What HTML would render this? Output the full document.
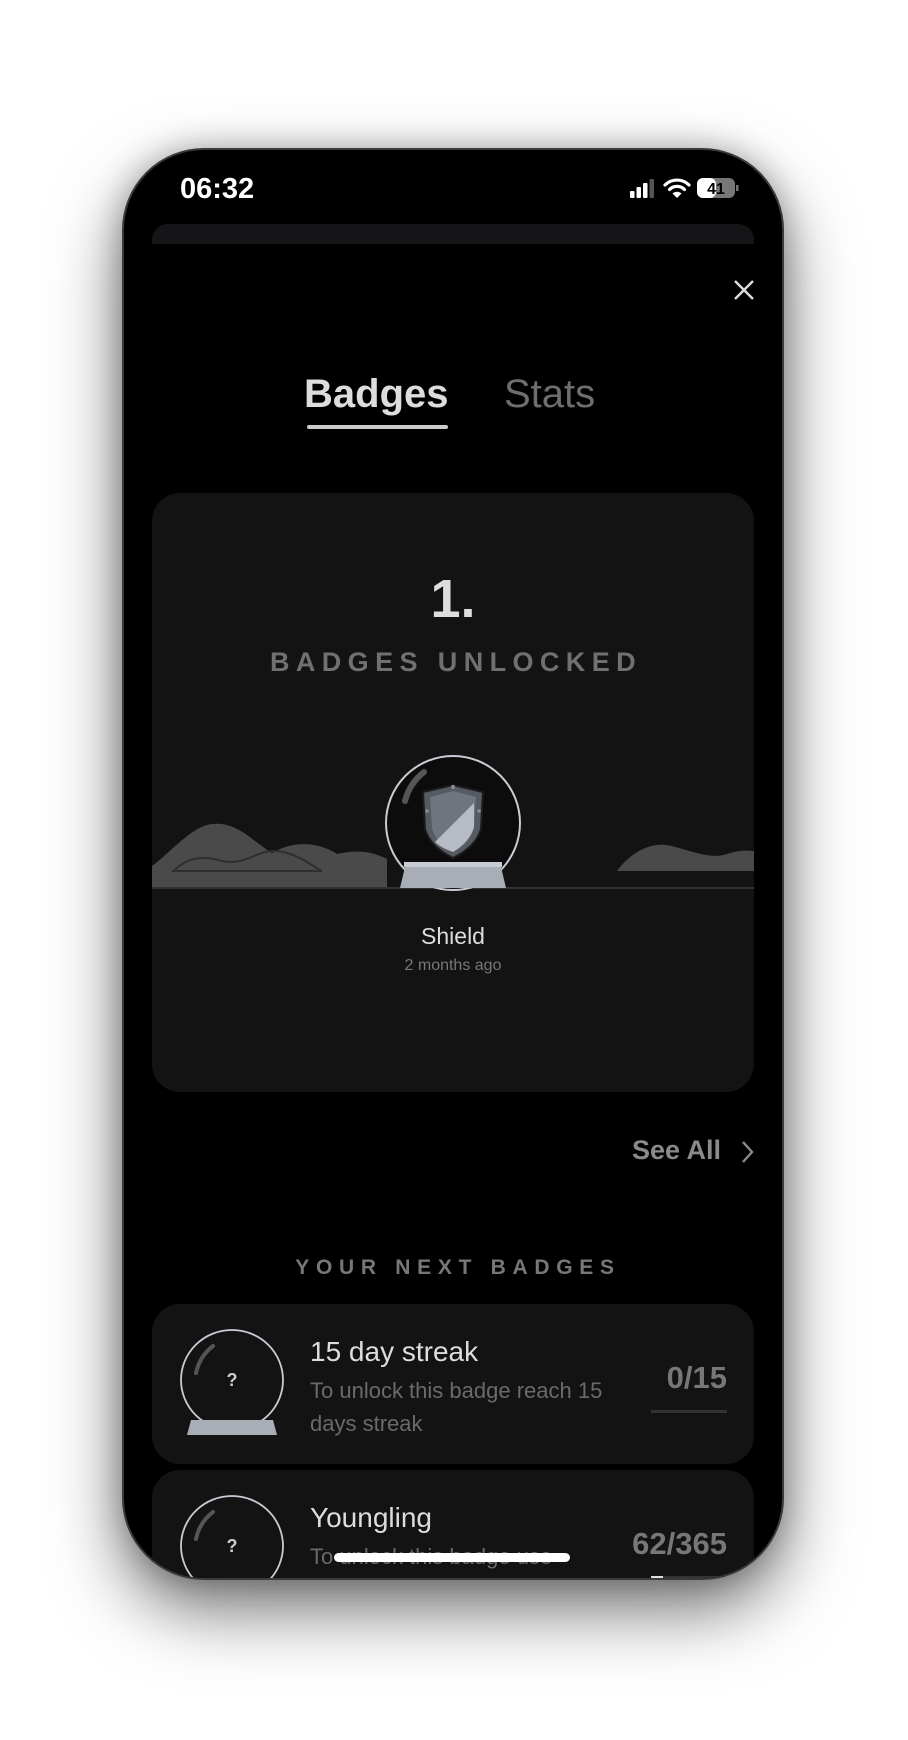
<!DOCTYPE html>
<html><head><meta charset="utf-8"><style>
*{margin:0;padding:0;box-sizing:border-box}
body{width:908px;height:1740px;background:#fff;position:relative;overflow:hidden;font-family:"Liberation Sans",sans-serif}
.phone{position:absolute;left:122px;top:148px;width:662px;height:1432px;border-radius:82px;background:#000;border:2px solid #3a3a3a;box-shadow:0 30px 70px rgba(0,0,0,.55),0 0 30px rgba(0,0,0,.25);overflow:hidden}
.a{position:absolute}
.card{background:#131313;border-radius:28px}
</style></head><body>
<div class="phone">
 <div class="a" style="left:56px;top:23px;color:#fff;font-weight:bold;font-size:29px">06:32</div>
 <svg class="a" style="left:506px;top:26px" width="130" height="28" viewBox="0 0 130 28">
  <rect x="0" y="15" width="4.5" height="7" rx="1" fill="#fff"/><rect x="6.5" y="11" width="4.5" height="11" rx="1" fill="#fff"/><rect x="13" y="7" width="4.5" height="15" rx="1" fill="#fff"/><rect x="19.5" y="3" width="4.5" height="19" rx="1" fill="#555"/>
  <path d="M35 9 a17 17 0 0 1 24 0 M39.5 13.5 a10.5 10.5 0 0 1 15 0" stroke="#fff" stroke-width="3.2" fill="none" stroke-linecap="round"/><path d="M42.5 17.5 L47 22 L51.5 17.5 a6.5 6.5 0 0 0 -9 0z" fill="#fff"/>
  <rect x="67" y="2" width="38" height="20" rx="6" fill="#777"/><rect x="67" y="2" width="19" height="20" rx="6" fill="#fff"/><text x="86" y="18" font-size="16" font-weight="bold" text-anchor="middle" fill="#000" font-family="Liberation Sans">41</text><rect x="106" y="9" width="2.5" height="6" fill="#777"/>
 </svg>
 <div class="a" style="left:28px;top:74px;width:602px;height:20px;background:#151517;border-radius:16px 16px 0 0"></div>
 <svg class="a" style="left:608px;top:128px" width="24" height="24"><path d="M3 3L21 21M21 3L3 21" stroke="#ddd" stroke-width="2.4"/></svg>
 <div class="a" style="left:180px;top:222px;color:#ddd;font-weight:bold;font-size:40px">Badges</div>
 <div class="a" style="left:183px;top:275px;width:141px;height:4px;background:#ccc;border-radius:2px"></div>
 <div class="a" style="left:380px;top:222px;color:#6e6e6e;font-size:40px">Stats</div>
 <div class="a card" style="left:28px;top:343px;width:602px;height:599px;overflow:hidden">
  <div class="a" style="left:0;width:602px;top:75px;text-align:center;color:#ddd;font-weight:bold;font-size:54px">1.</div>
  <div class="a" style="left:3px;width:602px;top:154px;text-align:center;color:#707070;font-weight:bold;font-size:27px;letter-spacing:6.4px">BADGES UNLOCKED</div>
  <svg class="a" style="left:0;top:248px" width="602" height="160" viewBox="0 0 602 160">
   <path d="M0 125 C20 110 40 85 60 83 C85 80 100 100 120 112 C140 100 165 100 185 113 C200 110 215 108 235 118 L235 147 L0 147z" fill="#4a4a4a"/>
   <path d="M22 130 C35 115 55 115 70 120 C95 125 105 108 125 110 C145 112 160 125 170 130 Z" fill="none" stroke="#2e2e2e" stroke-width="2"/>
   <path d="M20 130 L165 130" stroke="#2e2e2e" stroke-width="2"/>
   <path d="M465 130 C480 110 500 100 520 105 C545 112 560 118 575 113 C590 108 598 110 602 110 L602 130z" fill="#4a4a4a"/>
   <path d="M0 147 L602 147" stroke="#333" stroke-width="2"/>
   <ellipse cx="301" cy="82" rx="67" ry="67" fill="#0c0c0c" stroke="#c8ccd4" stroke-width="2"/>
   <path d="M253 60 A52 54 0 0 1 272 31" stroke="#555" stroke-width="6" fill="none" stroke-linecap="round"/>
   <path d="M248 147 L253 126 L349 126 L354 147z" fill="#a9adb6"/>
   <rect x="252" y="121" width="98" height="5" fill="#c8ccd4"/>
   <path d="M271 51 L301 44 L331 51 L329 88 C325 102 313 111 301 117 C289 111 277 102 273 88z" fill="#565a63" stroke="#1c1c1c" stroke-width="2"/>
   <path d="M278 56 L301 50 L324 56 L322 87 C319 99 310 106 301 111 C292 106 283 99 280 87z" fill="#70747d"/>
   <path d="M283 101 L322 62 L322 86 C318 99 309 106 301 111 C293 108 287 105 283 101z" fill="#b8bcc4"/>
   <circle cx="301" cy="46" r="2" fill="#8a8e96"/><circle cx="275" cy="70" r="1.8" fill="#8a8e96"/><circle cx="327" cy="70" r="1.8" fill="#8a8e96"/>
  </svg>
  <div class="a" style="left:0;width:602px;top:430px;text-align:center;color:#ddd;font-size:23px">Shield</div>
  <div class="a" style="left:0;width:602px;top:464px;text-align:center;color:#777;font-size:16px">2 months ago</div>
 </div>
 <div class="a" style="left:508px;top:985px;color:#8a8a8a;font-weight:bold;font-size:27px">See All</div>
 <svg class="a" style="left:616px;top:989px" width="16" height="26"><path d="M3 3L12 13L3 23" stroke="#8a8a8a" stroke-width="2.4" fill="none"/></svg>
 <div class="a" style="left:4px;width:660px;top:1106px;text-align:center;color:#777;font-weight:bold;font-size:21px;letter-spacing:6.7px">YOUR NEXT BADGES</div>
 <div class="a card" style="left:28px;top:1154px;width:602px;height:160px"></div>
 <div class="a card" style="left:28px;top:1320px;width:602px;height:160px"></div>
 <svg class="a" style="left:53px;top:1178px" width="110" height="110"><ellipse cx="55" cy="52" rx="51" ry="50" fill="none" stroke="#c8ccd4" stroke-width="1.8"/><path d="M19 45 A46 46 0 0 1 36 18" stroke="#555" stroke-width="4" fill="none" stroke-linecap="round"/><path d="M10 107 L14 92 L96 92 L100 107z" fill="#a9adb6"/><text x="55" y="58" text-anchor="middle" fill="#ccc" font-size="18" font-weight="bold" font-family="Liberation Sans">?</text></svg>
 <svg class="a" style="left:53px;top:1344px" width="110" height="110"><ellipse cx="55" cy="52" rx="51" ry="50" fill="none" stroke="#c8ccd4" stroke-width="1.8"/><path d="M19 45 A46 46 0 0 1 36 18" stroke="#555" stroke-width="4" fill="none" stroke-linecap="round"/><text x="55" y="58" text-anchor="middle" fill="#ccc" font-size="18" font-weight="bold" font-family="Liberation Sans">?</text></svg>
 <div class="a" style="left:186px;top:1186px;color:#ddd;font-size:28px">15 day streak</div>
 <div class="a" style="left:186px;top:1224px;width:330px;color:#6a6a6a;font-size:22px;line-height:33px">To unlock this badge reach 15 days streak</div>
 <div class="a" style="right:55px;top:1210px;color:#777;font-weight:bold;font-size:31px">0/15</div>
 <div class="a" style="left:527px;top:1260px;width:76px;height:3px;background:#333"></div>
 <div class="a" style="left:186px;top:1352px;color:#ddd;font-size:28px">Youngling</div>
 <div class="a" style="left:186px;top:1390px;width:290px;color:#6a6a6a;font-size:22px;line-height:33px">To unlock this badge use stoic for</div>
 <div class="a" style="right:55px;top:1376px;color:#777;font-weight:bold;font-size:31px">62/365</div>
 <div class="a" style="left:527px;top:1426px;width:76px;height:3px;background:#333"></div>
 <div class="a" style="left:527px;top:1426px;width:12px;height:3px;background:#ddd"></div>
 <div class="a" style="left:210px;top:1403px;width:236px;height:9px;background:#fff;border-radius:5px"></div>
</div>
</body></html>
